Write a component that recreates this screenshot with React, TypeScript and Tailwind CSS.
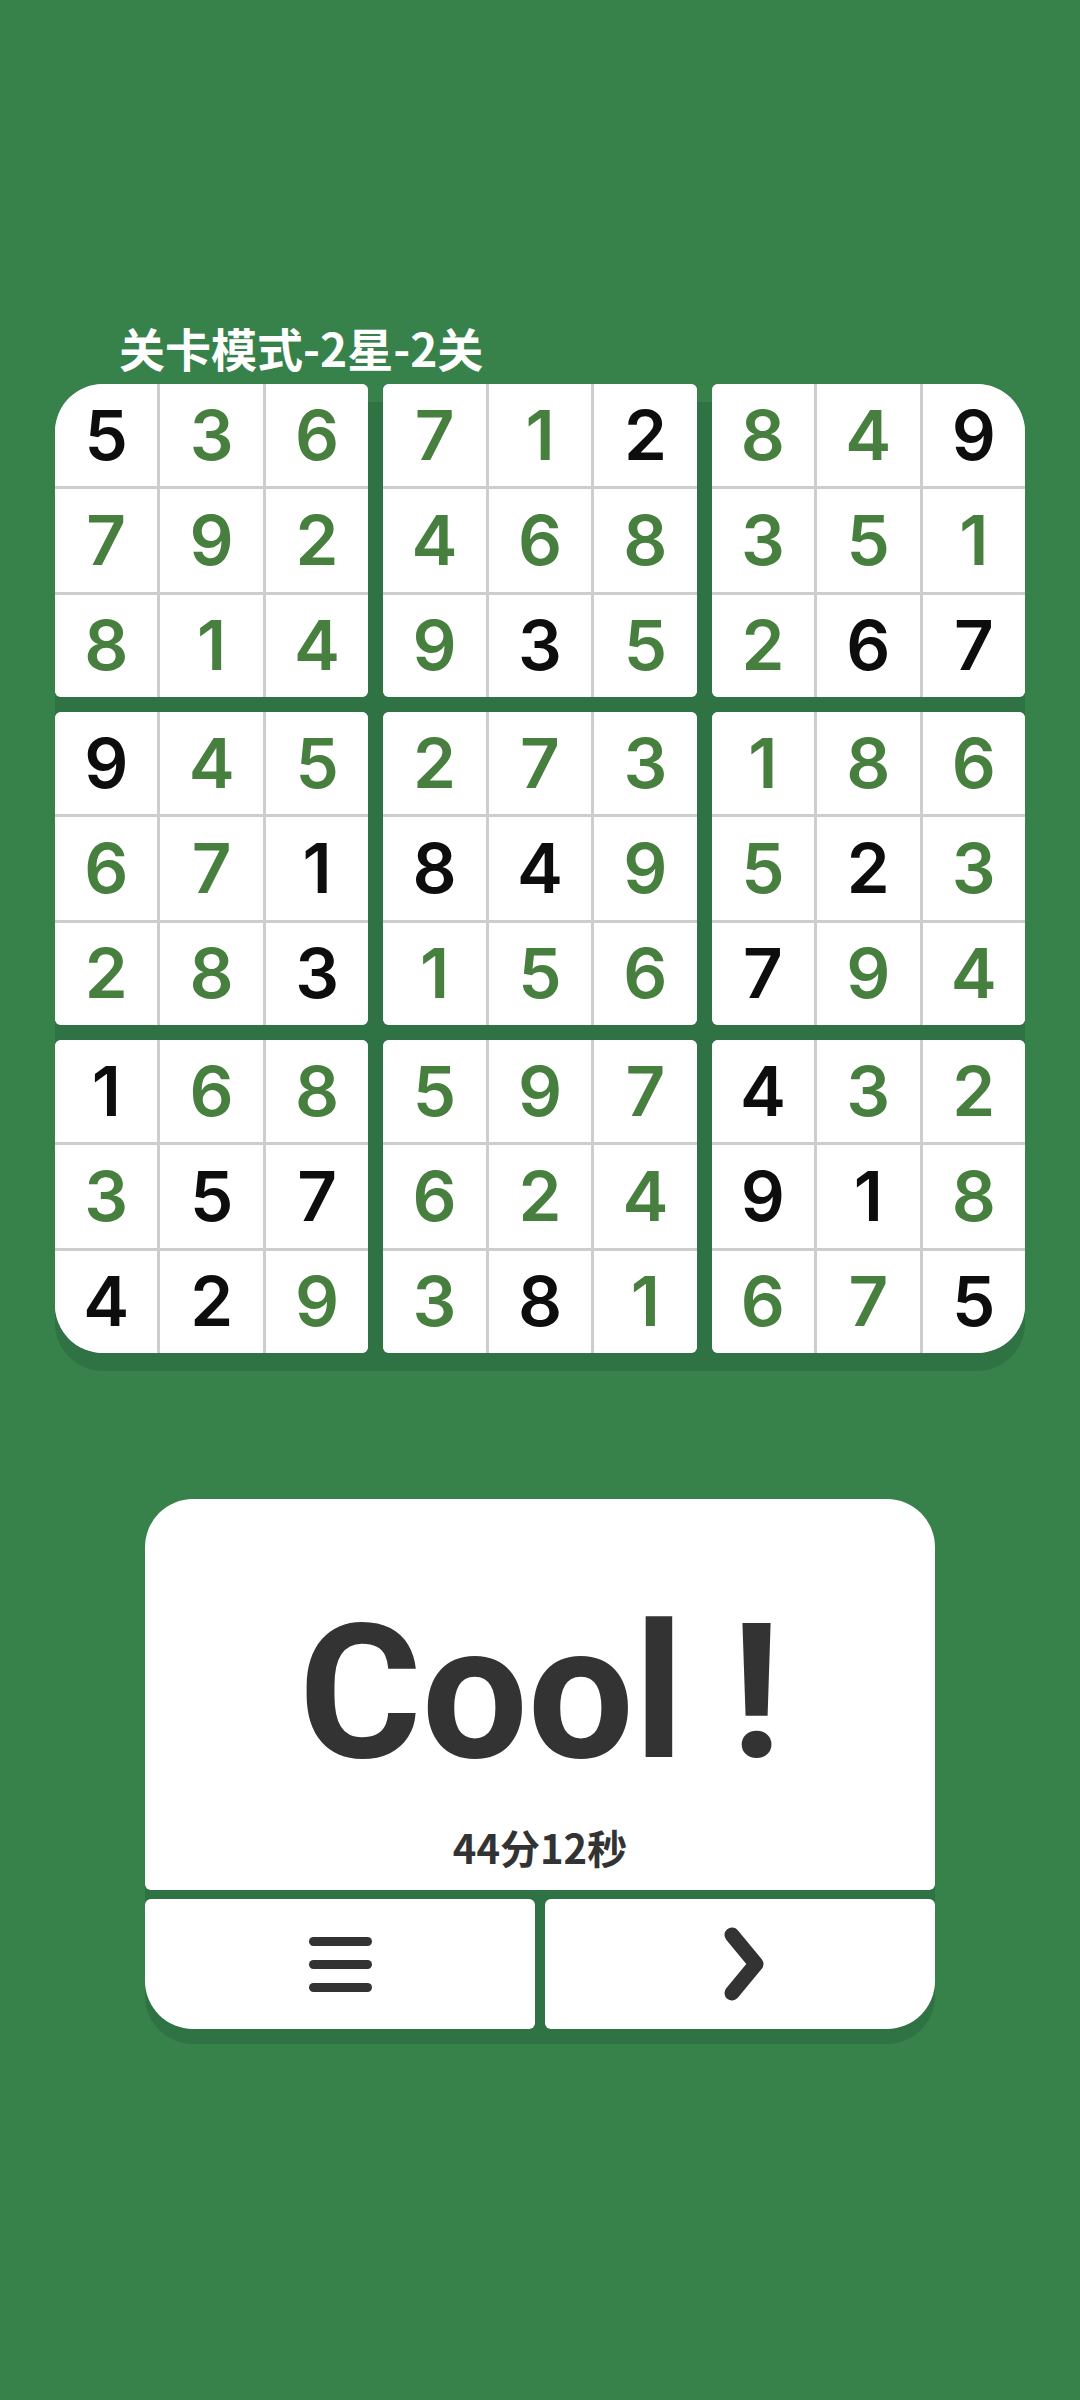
import React from "react";

const ROWS = [
  "5b3g6g7g1g2b8g4g9b",
  "7g9g2g4g6g8g3g5g1g",
  "8g1g4g9g3b5g2g6b7b",
  "9b4g5g2g7g3g1g8g6g",
  "6g7g1b8b4b9g5g2b3g",
  "2g8g3b1g5g6g7b9g4g",
  "1b6g8g5g9g7g4b3g2g",
  "3g5b7b6g2g4g9b1b8g",
  "4b2b9g3g8b1g6g7g5b",
];

const BOX_ROUND = [
  "rounded-tl-[48px] rounded-tr-[6px] rounded-bl-[6px] rounded-br-[6px]",
  "rounded-[6px]",
  "rounded-tl-[6px] rounded-tr-[48px] rounded-bl-[6px] rounded-br-[6px]",
  "rounded-[6px]",
  "rounded-[6px]",
  "rounded-[6px]",
  "rounded-tl-[6px] rounded-tr-[6px] rounded-bl-[48px] rounded-br-[6px]",
  "rounded-[6px]",
  "rounded-tl-[6px] rounded-tr-[6px] rounded-bl-[6px] rounded-br-[48px]",
];

function cell(row: number, col: number) {
  const s = ROWS[row];
  return { d: s[col * 2], black: s[col * 2 + 1] === "b" };
}

function Box({ index }: { index: number }) {
  const br = Math.floor(index / 3);
  const bc = index % 3;
  const cells = [];
  for (let r = 0; r < 3; r++) {
    for (let c = 0; c < 3; c++) {
      const { d, black } = cell(br * 3 + r, bc * 3 + c);
      cells.push(
        <div
          key={`${r}-${c}`}
          className={
            "bg-white flex items-center justify-center text-[69px] leading-none font-semibold " +
            (black ? "text-[#0d0d0d]" : "text-[#467f3e]")
          }
        >
          {d}
        </div>
      );
    }
  }
  return (
    <div
      className={
        "h-[313px] grid grid-cols-3 grid-rows-3 gap-[3px] bg-[#cdcdcd] overflow-hidden " +
        BOX_ROUND[index]
      }
    >
      {cells}
    </div>
  );
}

export default function App() {
  return (
    <div
      className="w-[1080px] h-[2400px] bg-[#37814a] flex flex-col"
      style={{ fontFamily: "Inter, 'Noto Sans CJK SC', sans-serif" }}
    >
      <div
        className="pt-[324px] pl-[119px] text-[46px] leading-none font-bold text-white"
        style={{ fontFamily: "'Noto Sans CJK SC', sans-serif" }}
      >
        关卡模式-2星-2关
      </div>

      <div className="relative ml-[55px] mt-[14px] w-[970px]">
        <div className="absolute inset-x-0 top-[18px] -bottom-[18px] rounded-[48px] bg-[#2f7243]" />
        <div className="relative grid grid-cols-3 gap-[15px]">
          {Array.from({ length: 9 }, (_, i) => (
            <Box key={i} index={i} />
          ))}
        </div>
      </div>

      <div className="relative ml-[145px] mt-[146px] w-[790px]">
        <div className="absolute inset-x-0 top-[15px] -bottom-[15px] rounded-[48px] bg-[#2f7243]" />
        <div className="relative flex flex-col gap-[9px]">
          <div className="h-[391px] bg-white rounded-tl-[48px] rounded-tr-[48px] rounded-bl-[6px] rounded-br-[6px] flex flex-col items-center">
            <div
              className="mt-[100px] text-[188px] leading-none font-bold text-[#333333]"
              style={{ fontFamily: "Roboto, sans-serif" }}
            >
              Cool !
            </div>
            <div
              className="mt-[40px] text-[40px] leading-none font-bold text-[#333333]"
              style={{ fontFamily: "'Noto Sans CJK SC', sans-serif" }}
            >
              44分12秒
            </div>
          </div>
          <div className="grid grid-cols-2 gap-[10px] h-[130px]">
            <div className="bg-white rounded-tl-[6px] rounded-tr-[6px] rounded-bl-[48px] rounded-br-[6px] flex flex-col items-center justify-center gap-[14px]">
              <div className="w-[63px] h-[9px] rounded-full bg-[#333333]" />
              <div className="w-[63px] h-[9px] rounded-full bg-[#333333]" />
              <div className="w-[63px] h-[9px] rounded-full bg-[#333333]" />
            </div>
            <div className="bg-white rounded-tl-[6px] rounded-tr-[6px] rounded-bl-[6px] rounded-br-[48px] flex items-center justify-center">
              <svg width="60" height="80" viewBox="0 0 60 80" className="ml-[10px]">
                <path
                  d="M17 11 L41 40 L17 69"
                  fill="none"
                  stroke="#333333"
                  strokeWidth="15"
                  strokeLinecap="round"
                  strokeLinejoin="round"
                />
              </svg>
            </div>
          </div>
        </div>
      </div>
    </div>
  );
}
